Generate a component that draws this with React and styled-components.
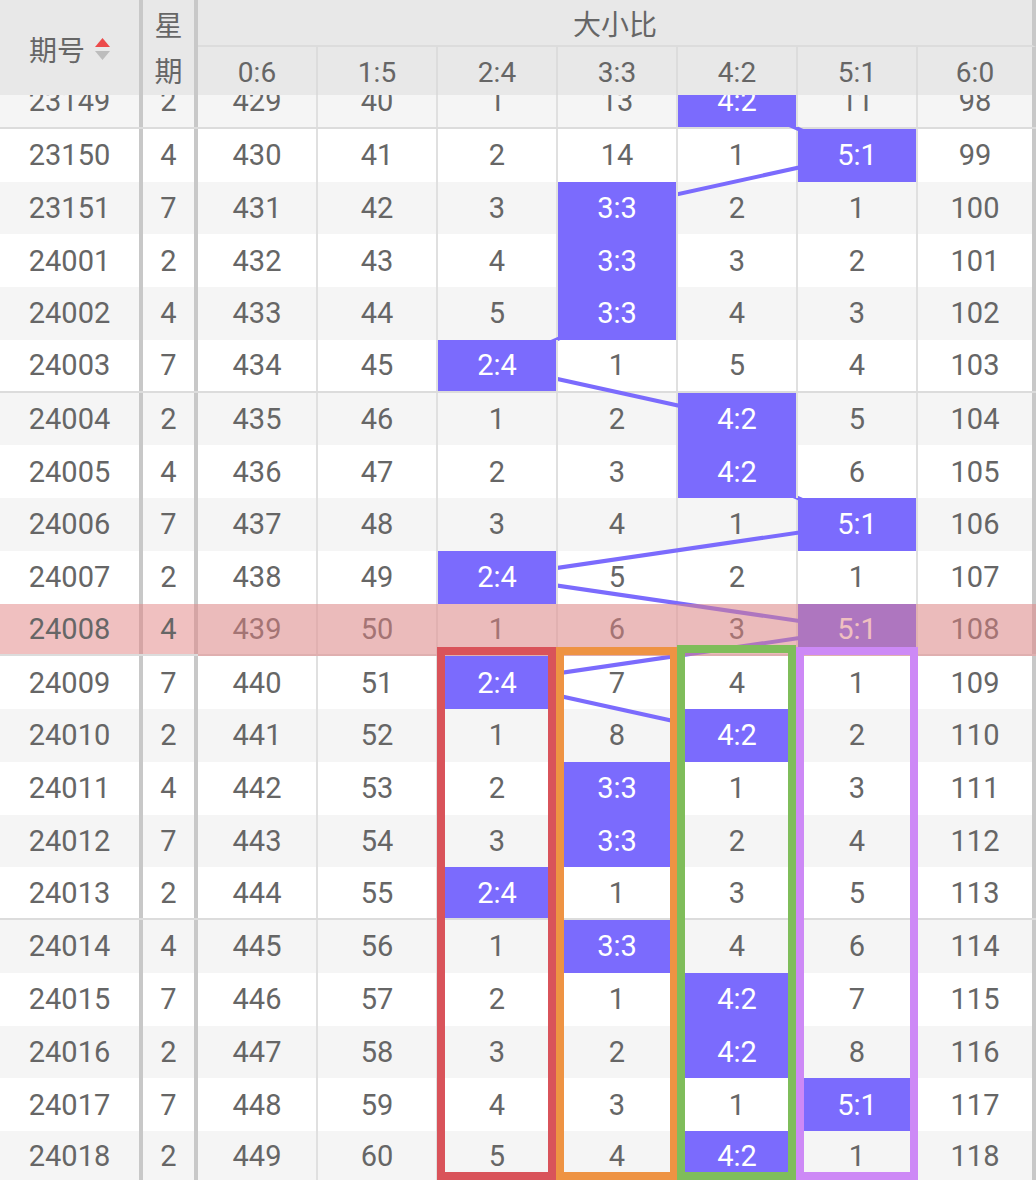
import React, { useLayoutEffect, useRef } from 'react';
import styled, { createGlobalStyle } from 'styled-components';

const GlobalStyle = createGlobalStyle`
  html, body { margin: 0; padding: 0; background: #fff; }
  * { box-sizing: border-box; }
`;

const ROW_H = 52.75;
const SCROLL = 19;
const DATA_LEFT = 198;
const COL_W = 120;
const HIT = '#7b6bfd';

const LABELS = ['0:6', '1:5', '2:4', '3:3', '4:2', '5:1', '6:0'];

const ROWS = [
  ['23149', 2, 4, [429, 40, 1, 13, 0, 11, 98]],
  ['23150', 4, 5, [430, 41, 2, 14, 1, 0, 99]],
  ['23151', 7, 3, [431, 42, 3, 0, 2, 1, 100]],
  ['24001', 2, 3, [432, 43, 4, 0, 3, 2, 101]],
  ['24002', 4, 3, [433, 44, 5, 0, 4, 3, 102]],
  ['24003', 7, 2, [434, 45, 0, 1, 5, 4, 103]],
  ['24004', 2, 4, [435, 46, 1, 2, 0, 5, 104]],
  ['24005', 4, 4, [436, 47, 2, 3, 0, 6, 105]],
  ['24006', 7, 5, [437, 48, 3, 4, 1, 0, 106]],
  ['24007', 2, 2, [438, 49, 0, 5, 2, 1, 107]],
  ['24008', 4, 5, [439, 50, 1, 6, 3, 0, 108]],
  ['24009', 7, 2, [440, 51, 0, 7, 4, 1, 109]],
  ['24010', 2, 4, [441, 52, 1, 8, 0, 2, 110]],
  ['24011', 4, 3, [442, 53, 2, 0, 1, 3, 111]],
  ['24012', 7, 3, [443, 54, 3, 0, 2, 4, 112]],
  ['24013', 2, 2, [444, 55, 0, 1, 3, 5, 113]],
  ['24014', 4, 3, [445, 56, 1, 0, 4, 6, 114]],
  ['24015', 7, 4, [446, 57, 2, 1, 0, 7, 115]],
  ['24016', 2, 4, [447, 58, 3, 2, 0, 8, 116]],
  ['24017', 7, 5, [448, 59, 4, 3, 1, 0, 117]],
  ['24018', 2, 4, [449, 60, 5, 4, 0, 1, 118]],
];

const PINK_INDEX = 10;

const BOXES = [
  { left: 437, width: 119, top: 571, color: '#d9535a' },
  { left: 556, width: 122, top: 571, color: '#ee9343' },
  { left: 677, width: 119, top: 569, color: '#7fbd5a' },
  { left: 796, width: 122, top: 571, color: '#cd89f6' },
];

const Page = styled.div`
  width: 1036px;
  height: 1180px;
  display: flex;
  flex-direction: column;
  overflow: hidden;
  background: #fff;
  color: #666;
  font-family: Roboto, "Noto Sans CJK SC", "Noto Sans", sans-serif;
  font-weight: 400;
`;

const Header = styled.div`
  flex: none;
  height: 95px;
  display: grid;
  grid-template-columns: 143px 55px 1fr;
  grid-template-rows: 47px 48px;
  background: #e8e8e8;
  color: #666;
  font-size: 28px;
  position: relative;
  z-index: 5;
`;

const KeyHead = styled.div`
  grid-row: 1 / 3;
  border-right: 4px solid #c8c8c8;
  display: flex;
  align-items: center;
  justify-content: center;
  gap: 10px;
  padding-top: 2px;
`;

const WeekHead = styled.div`
  grid-row: 1 / 3;
  border-right: 4px solid #c8c8c8;
  display: flex;
  flex-direction: column;
  align-items: center;
  justify-content: center;
  gap: 12px;
  line-height: 34px;
  padding-top: 4px;
`;

const GroupHead = styled.div`
  grid-column: 3;
  grid-row: 1;
  border-bottom: 2px solid #dcdcdc;
  border-right: 4px solid #c8c8c8;
  display: flex;
  align-items: center;
  justify-content: center;
  padding-top: 1px;
`;

const SubHeads = styled.div`
  grid-column: 3;
  grid-row: 2;
  display: flex;
`;

const SubHead = styled.div`
  width: ${(p) => (p.$last ? 118 : COL_W)}px;
  border-right: ${(p) => (p.$last ? '4px solid #c8c8c8' : '2px solid #dcdcdc')};
  display: flex;
  align-items: center;
  justify-content: center;
  padding-top: 3px;
  font-size: 28px;
`;

const Viewport = styled.div`
  flex: 1;
  overflow: hidden;
  position: relative;
`;

const Content = styled.div`
  position: relative;
`;

const Row = styled.div`
  display: flex;
  height: ${ROW_H}px;
  background: ${(p) => (p.$alt ? '#f5f5f5' : '#fff')};
  border-bottom: ${(p) => (p.$group ? '2px solid #dcdcdc' : 'none')};
  font-size: 29px;
`;

const KeyCell = styled.div`
  width: 143px;
  border-right: 4px solid ${(p) => (p.$pink ? '#d5a5a5' : '#c8c8c8')};
  background: ${(p) => (p.$pink ? '#f0c0c0' : 'transparent')};
  display: flex;
  align-items: center;
  justify-content: center;
`;

const WeekCell = styled(KeyCell)`
  width: 55px;
`;

const DataCell = styled.div`
  width: ${(p) => (p.$last ? 118 : COL_W)}px;
  border-right: ${(p) => (p.$last ? '4px solid #c8c8c8' : '2px solid #e0e0e0')};
  background: ${(p) => (p.$hit ? HIT : 'transparent')};
  color: ${(p) => (p.$hit ? '#fff' : '#666')};
  position: ${(p) => (p.$hit ? 'relative' : 'static')};
  z-index: ${(p) => (p.$hit ? 2 : 'auto')};
  display: flex;
  align-items: center;
  justify-content: center;
`;

const LineLayer = styled.svg`
  position: absolute;
  left: 0;
  top: 0;
  z-index: 1;
  pointer-events: none;
`;

const PinkOverlay = styled.div`
  position: absolute;
  left: ${DATA_LEFT}px;
  right: 0;
  height: ${ROW_H}px;
  background: rgba(226, 130, 130, 0.5);
  z-index: 3;
  pointer-events: none;
`;

const TrendBox = styled.div`
  position: absolute;
  border: 8px solid ${(p) => p.$color};
  z-index: 4;
  pointer-events: none;
`;

function SortIcon() {
  return (
    <svg width="15" height="22" viewBox="0 0 15 22">
      <polygon points="7.5,0 15,9 0,9" fill="#ec4a4a" />
      <polygon points="0,13 15,13 7.5,22" fill="#bdbdbd" />
    </svg>
  );
}

function cellCenter(i, col) {
  const w = col === 6 ? 114 : 118;
  const x = DATA_LEFT + col * COL_W + w / 2;
  const y = i * ROW_H + 26;
  return [x, y];
}

export default function App() {
  const viewRef = useRef(null);
  useLayoutEffect(() => {
    if (viewRef.current) viewRef.current.scrollTop = SCROLL;
  }, []);

  const totalH = ROWS.length * ROW_H;
  const points = ROWS.map((r, i) => cellCenter(i, r[2]));

  return (
    <Page>
      <GlobalStyle />
      <Header>
        <KeyHead>
          <span>期号</span>
          <SortIcon />
        </KeyHead>
        <WeekHead>
          <span>星</span>
          <span>期</span>
        </WeekHead>
        <GroupHead>大小比</GroupHead>
        <SubHeads>
          {LABELS.map((l, k) => (
            <SubHead key={l} $last={k === LABELS.length - 1}>
              {l}
            </SubHead>
          ))}
        </SubHeads>
      </Header>
      <Viewport ref={viewRef}>
        <Content>
          {ROWS.map(([no, wk, hit, vals], i) => {
            const pink = i === PINK_INDEX;
            return (
              <Row key={no} $alt={i % 2 === 0} $group={i % 5 === 0}>
                <KeyCell $pink={pink}>{no}</KeyCell>
                <WeekCell $pink={pink}>{wk}</WeekCell>
                {vals.map((v, k) => (
                  <DataCell key={k} $hit={k === hit} $last={k === 6}>
                    {k === hit ? LABELS[k] : v}
                  </DataCell>
                ))}
              </Row>
            );
          })}
          <LineLayer width="1036" height={totalH} viewBox={`0 0 1036 ${totalH}`}>
            {points.slice(1).map((p, idx) => {
              const a = points[idx];
              return (
                <line
                  key={idx}
                  x1={a[0]}
                  y1={a[1]}
                  x2={p[0]}
                  y2={p[1]}
                  stroke={HIT}
                  strokeWidth="4"
                />
              );
            })}
          </LineLayer>
          <PinkOverlay style={{ top: PINK_INDEX * ROW_H }} />
          {BOXES.map((b) => (
            <TrendBox
              key={b.color}
              $color={b.color}
              style={{ left: b.left, top: b.top, width: b.width, height: 1104 - b.top }}
            />
          ))}
        </Content>
      </Viewport>
    </Page>
  );
}
